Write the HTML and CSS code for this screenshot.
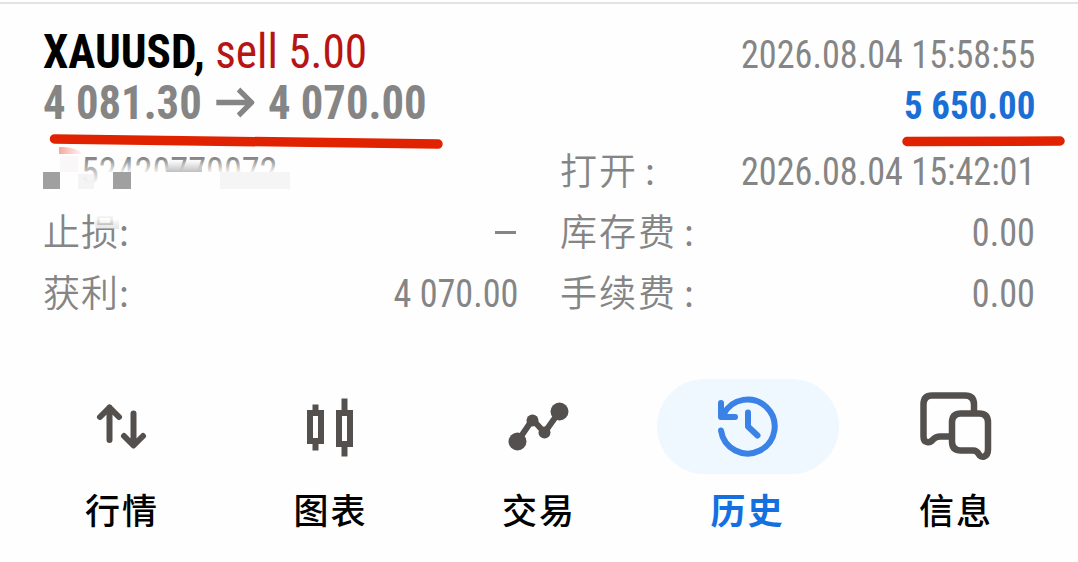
FILE: index.html
```
<!DOCTYPE html>
<html lang="zh">

<head>
    <meta charset="UTF-8">
    <meta name="viewport" content="width=device-width, initial-scale=1.0">
    <title>历史</title>
    <link rel="stylesheet" href="styles.css">
</head>

<body>

    <section class="deal">
        <div class="line">
            <h1><b>XAUUSD,</b> <span class="sell">sell 5.00</span></h1>
            <span class="date">2026.08.04 15:58:55</span>
        </div>
        <div class="line">
            <div class="prices">
                <span>4 081.30</span>
                <svg width="41" height="32" viewBox="0 0 41 32">
                    <path d="M0 15.500H37M24 2.500L38 15.500L24 28.500" fill="none" stroke="#858585" stroke-width="5.500" />
                </svg>
                <span>4 070.00</span>
            </div>
            <span class="profit">5 650.00</span>
        </div>

        <div class="details">
            <div class="row">
                <span class="ticket">52420770072</span>
            </div>
            <div class="row">
                <span class="label wide">打开<i>:</i></span>
                <span class="value">2026.08.04 15:42:01</span>
            </div>
            <div class="row">
                <span class="label">止损<i>:</i></span>
                <span class="dash"></span>
            </div>
            <div class="row">
                <span class="label wide">库存费<i>:</i></span>
                <span class="value">0.00</span>
            </div>
            <div class="row">
                <span class="label">获利<i>:</i></span>
                <span class="value">4 070.00</span>
            </div>
            <div class="row">
                <span class="label wide">手续费<i>:</i></span>
                <span class="value">0.00</span>
            </div>
        </div>

        <!-- marker strokes and the smudged ticket number -->
        <svg class="marks" width="1078" height="260" viewBox="0 0 1078 260">
            <defs>
                <linearGradient id="fade" x1="0" y1="0" x2="0" y2="1">
                    <stop offset="0" stop-color="#fefefe" stop-opacity="0" />
                    <stop offset="1" stop-color="#fefefe" />
                </linearGradient>
                <linearGradient id="smear" x1="0" y1="0" x2="0" y2="1">
                    <stop offset="0" stop-color="#c8c8c8" stop-opacity="0" />
                    <stop offset="1" stop-color="#c0c0c0" />
                </linearGradient>
                <linearGradient id="soft" x1="0" y1="0" x2="0" y2="1">
                    <stop offset="0" stop-color="#fefefe" />
                    <stop offset="0.4" stop-color="#fefefe" stop-opacity="0.85" />
                    <stop offset="1" stop-color="#d0d0d0" stop-opacity="0.5" />
                </linearGradient>
                <linearGradient id="pink" x1="0" y1="0" x2="1" y2="0">
                    <stop offset="0" stop-color="#f5a79c" />
                    <stop offset="1" stop-color="#fefefe" />
                </linearGradient>
            </defs>
            <rect x="99" y="158" width="182" height="16" fill="url(#fade)" />
            <rect x="80" y="158" width="20" height="26" fill="url(#fade)" />
            <rect x="99" y="172" width="182" height="17" fill="#fefefe" />
            <rect x="80" y="183" width="20" height="6" fill="#fefefe" />
            <path d="M170 160H202V172H166Z" fill="url(#smear)" />
            <path d="M59 147Q74 146 84 154H59Z" fill="url(#pink)" />
            <path d="M60 156H78V172H60Z" fill="#faf7f8" />
            <path d="M43 172H60V189H43ZM113 172H131V189H113Z" fill="#a0a0a0" />
            <path d="M78 174H94V189H78Z" fill="#f0f0f0" fill-opacity="0.7" />
            <path d="M220 172H290V189H220Z" fill="#f5f5f5" />
            <path d="M91 213H119V229H96Z" fill="url(#soft)" />
            <path d="M54.500 139L438 144" stroke="#e02200" stroke-width="9.500" stroke-linecap="round" />
            <path d="M907 141.500L1060 141" stroke="#e02200" stroke-width="9.500" stroke-linecap="round" />
        </svg>
    </section>

    <nav>
        <a>
            <svg width="72" height="72" viewBox="0 0 72 72" fill="none" stroke="#54504d" stroke-width="6" stroke-linecap="round" stroke-linejoin="round">
                <path d="M23.500 49.500V17M14 26.500L23.500 17L33 26.500M47.500 23V54M38 45.500L47.500 55L57 45.500" />
            </svg>
            <span>行情</span>
        </a>
        <a>
            <svg width="72" height="72" viewBox="0 0 72 72" fill="none" stroke="#54504d" stroke-width="6">
                <path d="M15 22.500H26V50.500H15ZM20.500 14V22M20.500 51V60M44 22.500H55V53.500H44ZM49.500 8V22M49.500 54V66" />
            </svg>
            <span>图表</span>
        </a>
        <a>
            <svg width="72" height="72" viewBox="0 0 72 72" fill="#54504d">
                <path d="M14.500 51L29.500 29L41.500 42L56.500 21" fill="none" stroke="#54504d" stroke-width="6" />
                <circle cx="14.500" cy="51" r="9" />
                <circle cx="29.500" cy="30" r="6" />
                <circle cx="41.500" cy="42" r="6" />
                <circle cx="56.500" cy="21" r="9" />
            </svg>
            <span>交易</span>
        </a>
        <a class="active">
            <svg width="72" height="72" viewBox="0 0 72 72" fill="none" stroke="#3b82e6" stroke-width="6" stroke-linecap="round" stroke-linejoin="round">
                <path d="M9 40A27 27 0 1 0 11.500 24M9 12.500V26.500H23M36 22V36L45.500 45" />
            </svg>
            <span>历史</span>
        </a>
        <a>
            <svg width="72" height="72" viewBox="0 0 72 72" fill="none" stroke="#54504d" stroke-width="6.500" stroke-linejoin="round">
                <path d="M54 22V14Q54 5 45 5H12Q3.500 5 3.500 14V46C3.500 53 10 53 13 49Q16 46 20 46H32" />
                <path d="M41 23H59Q68 23 68 32V59C68 67 61 68 59 64Q57 60 53 60H41Q32 60 32 51V32Q32 23 41 23Z" />
            </svg>
            <span>信息</span>
        </a>
    </nav>

</body>

</html>
```
FILE: styles.css
```
* {
    padding: 0;
    margin: 0;
    box-sizing: border-box;
}

html {
    background-color: #fefefe;
}

body {
    height: 560px;
    margin-top: 2px;
    border-top: 2px solid #e3e3e3;
    font-family: "Roboto Condensed", Roboto, "Noto Sans CJK SC", sans-serif;
    font-stretch: 75%;
    color: #858585;
    overflow: hidden;
}

.deal {
    position: relative;
    height: 375px;
    padding: 22px 43px 0 43px;
}

.line {
    display: flex;
    justify-content: space-between;
    height: 51px;
    line-height: 51px;
    white-space: nowrap;
}

h1 {
    font-size: 48px;
    font-weight: 400;
    color: #000;
    transform: scaleX(0.942);
    transform-origin: left;
}

.sell {
    color: #b81414;
}

.prices {
    display: flex;
    align-items: center;
    gap: 15px;
    font-size: 48px;
    font-weight: 700;
    transform: scaleX(0.931);
    transform-origin: left;
}

.date,
.value,
.ticket {
    font-size: 39.5px;
    transform: scaleX(0.916);
    transform-origin: right;
}

.date,
.profit {
    padding-top: 3px;
}

.profit {
    font-size: 39.5px;
    font-weight: 700;
    color: #1a6fd6;
    transform: scaleX(0.935);
    transform-origin: right;
}

.details {
    display: grid;
    grid-template-columns: 475px 475px;
    grid-auto-rows: 61px;
    column-gap: 42px;
    margin-top: 13px;
}

.row {
    display: flex;
    align-items: center;
    justify-content: space-between;
    white-space: nowrap;
}

.label {
    padding-bottom: 6px;
    font-family: "Noto Sans CJK SC", sans-serif;
    font-size: 37px;
    font-weight: 350;
    letter-spacing: 1px;
}

.label i {
    font-style: normal;
}

.wide {
    letter-spacing: 2px;
}

.wide i {
    margin-left: 7px;
}

.ticket {
    margin-left: 38px;
    transform-origin: left;
}

.dash {
    width: 21px;
    height: 3px;
    margin-right: 2px;
    background-color: #858585;
}

.marks {
    position: absolute;
    left: 0;
    top: -4px;
}

nav {
    display: grid;
    grid-template-columns: repeat(5, 182px);
    justify-content: space-between;
    padding: 0 31px;
}

nav a {
    display: flex;
    flex-direction: column;
    align-items: center;
    font-family: "Noto Sans CJK SC", sans-serif;
    font-size: 35px;
    font-weight: 500;
    letter-spacing: 2px;
    line-height: 69px;
    color: #000;
}

nav svg {
    width: 182px;
    height: 95px;
    padding: 11.5px 55px;
    border-radius: 48px;
}

nav .active {
    color: #1470e0;
    font-weight: 700;
}

.active svg {
    background-color: #eff7ff;
}
```
